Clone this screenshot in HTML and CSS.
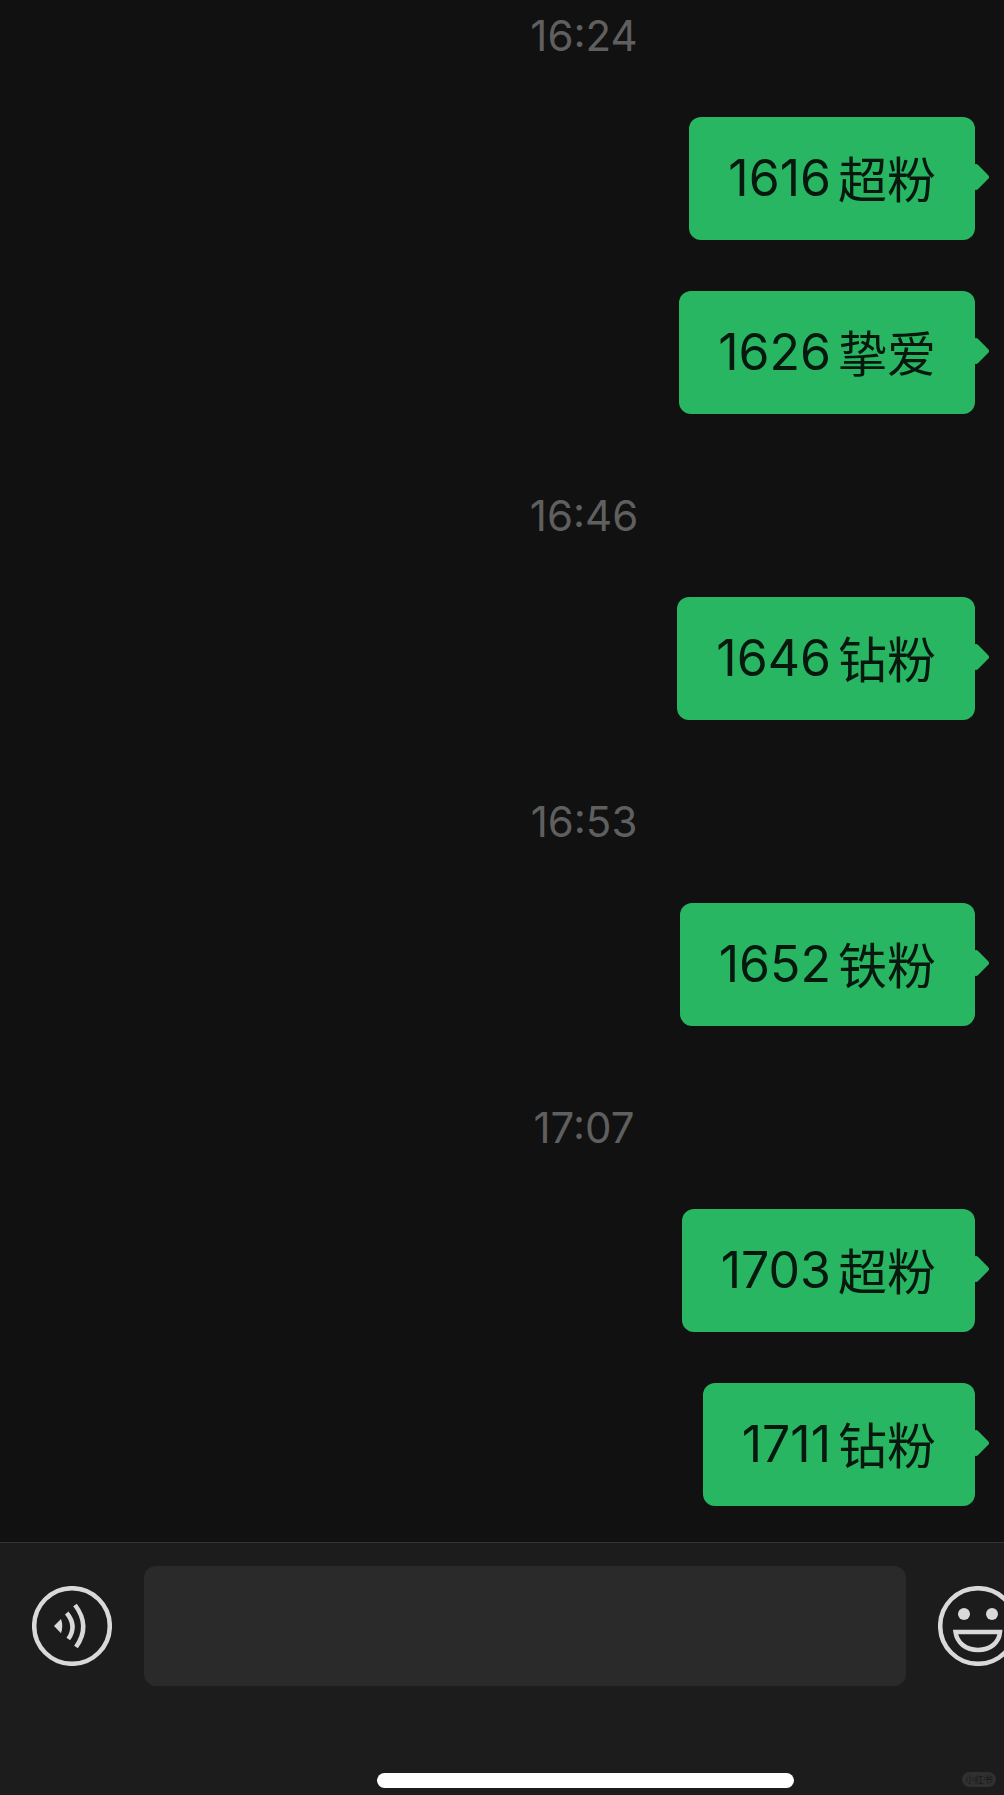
FILE: index.html
```html
<!DOCTYPE html>
<html lang="zh-CN">
<head>
    <meta charset="UTF-8">
    <meta name="viewport" content="width=device-width, initial-scale=1.0">
    <title>Chat</title>
    <link rel="stylesheet" href="styles.css">
</head>
<body>
    <div class="chat">
        <div class="time">16:24</div>
        <div class="bubble"><span class="num">1616</span><span class="label">超粉</span></div>
        <div class="bubble next"><span class="num">1626</span><span class="label">挚爱</span></div>
        <div class="time">16:46</div>
        <div class="bubble"><span class="num">1646</span><span class="label">钻粉</span></div>
        <div class="time">16:53</div>
        <div class="bubble"><span class="num">1652</span><span class="label">铁粉</span></div>
        <div class="time">17:07</div>
        <div class="bubble"><span class="num">1703</span><span class="label">超粉</span></div>
        <div class="bubble next"><span class="num">1711</span><span class="label">钻粉</span></div>
    </div>
    <div class="input-bar">
        <div class="input-row">
            <svg class="icon" viewBox="0 0 80 80">
                <circle cx="40" cy="40" r="37.8" fill="none" stroke="#d9d9d9" stroke-width="4.5"/>
                <path d="M22 40 L29 33 Q31.5 40 29 47.3 Z" fill="#d9d9d9"/>
                <path d="M34.7 27 Q45.5 40 36.3 53" fill="none" stroke="#d9d9d9" stroke-width="4.5"/>
                <path d="M43 19 Q59 40 44 61" fill="none" stroke="#d9d9d9" stroke-width="4.5"/>
            </svg>
            <div class="text-box"></div>
            <svg class="icon" viewBox="0 0 80 80">
                <circle cx="40" cy="40" r="37.8" fill="none" stroke="#d9d9d9" stroke-width="4.5"/>
                <circle cx="26" cy="28" r="6" fill="#d9d9d9"/>
                <circle cx="54" cy="28" r="6" fill="#d9d9d9"/>
                <path d="M17.5 46 H62 C61 57 52 64 40 64 C28 64 19 57 17.5 46 Z" fill="none" stroke="#d9d9d9" stroke-width="4.5"/>
            </svg>
        </div>
        <div class="home-bar"></div>
        <div class="mark">小红书</div>
    </div>
</body>
</html>
```

FILE: styles.css
```css
html, body {
    margin: 0;
    height: 1795px;
    overflow: hidden;
    background-color: #111111;
}
body {
    font-family: 'Inter', 'Noto Sans CJK SC', sans-serif;
    position: relative;
}
.chat {
    height: 1542px;
    display: flex;
    flex-direction: column;
    align-items: flex-end;
    padding: 0 29px 0 193px;
    box-sizing: border-box;
}
.time {
    align-self: center;
    height: 72px;
    line-height: 72px;
    margin: 66px 0 45px;
    font-size: 42px;
    color: #5f5f5f;
}
.time:first-child {
    margin-top: 0;
}
.bubble {
    position: relative;
    height: 123px;
    display: flex;
    align-items: center;
    gap: 7px;
    padding: 0 39px;
    background-color: #29b662;
    border-radius: 12px;
    font-size: 50px;
    color: #07180e;
}
.bubble::after {
    content: "";
    position: absolute;
    top: 50px;
    right: -11px;
    width: 20px;
    height: 20px;
    background-color: #29b662;
    border-radius: 3px;
    transform: rotate(45deg);
}
.bubble.next {
    margin-top: 51px;
}
.num {
    margin-bottom: 2px;
}
.label {
    font-family: 'Noto Sans CJK SC', sans-serif;
    font-size: 49px;
    margin-bottom: 4px;
}
.input-bar {
    height: 253px;
    background-color: #1c1c1c;
    border-top: 1px solid #333333;
    box-sizing: border-box;
    position: relative;
}
.input-row {
    display: flex;
    align-items: center;
    gap: 32px;
    padding: 23px 0 0 32px;
}
.icon {
    width: 80px;
    height: 80px;
    flex-shrink: 0;
}
.text-box {
    width: 762px;
    height: 120px;
    flex-shrink: 0;
    background-color: #2a2a2a;
    border-radius: 12px;
}
.home-bar {
    position: absolute;
    left: 377px;
    bottom: 7px;
    width: 417px;
    height: 15px;
    background-color: #ffffff;
    border-radius: 8px;
}
.mark {
    position: absolute;
    left: 962px;
    bottom: 8px;
    width: 34px;
    height: 15px;
    line-height: 15px;
    text-align: center;
    font-family: 'Noto Sans CJK SC', sans-serif;
    font-size: 9px;
    color: #1a1a1a;
    background-color: #303030;
    border-radius: 8px;
}
```
